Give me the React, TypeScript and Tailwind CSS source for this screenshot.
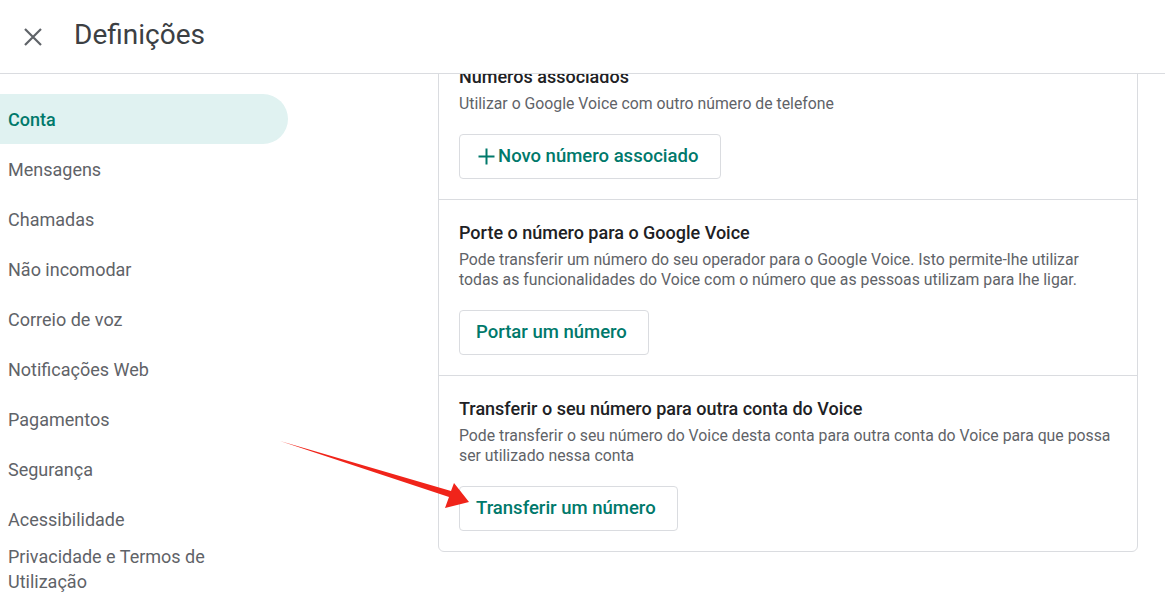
import React from 'react';

const font = { fontFamily: 'Roboto, "Noto Sans", Arial, sans-serif' };

const navItems = [
  'Conta',
  'Mensagens',
  'Chamadas',
  'Não incomodar',
  'Correio de voz',
  'Notificações Web',
  'Pagamentos',
  'Segurança',
  'Acessibilidade',
  'Privacidade e Termos de Utilização',
];

interface SectionProps {
  title: string;
  desc: string;
  button: React.ReactNode;
  btnWidth: string;
  last?: boolean;
}

const Section: React.FC<SectionProps> = ({ title, desc, button, btnWidth, last }) => (
  <div className={last ? 'px-5 pt-[21px] pb-[20px]' : 'px-5 pt-[21px] pb-[20px] border-b border-[#dadce0]'}>
    <div className="text-[18px] leading-6 font-medium text-[#202124]">{title}</div>
    <div className="text-[15.8px] leading-5 text-[#5f6368] mt-[5px]">{desc}</div>
    <button
      className={`${btnWidth} mt-[20px] h-[45px] pl-4 border border-[#dadce0] rounded-[4px] bg-white text-[18.5px] font-medium text-[#00796b] flex items-center`}
    >
      {button}
    </button>
  </div>
);

export default function App() {
  return (
    <div className="w-[1165px] h-[597px] bg-white overflow-hidden relative" style={font}>
      {/* Header */}
      <div className="h-[74px] flex items-center border-b border-[#dadce0]">
        <svg className="ml-[24px] w-[18px] h-[18px]" viewBox="0 0 18 18">
          <path d="M1 1 L17 17 M17 1 L1 17" stroke="#5f6368" strokeWidth="2.2" fill="none" />
        </svg>
        <div className="ml-[32px] text-[28px] text-[#3c4043] leading-none pb-[4px]">Definições</div>
      </div>

      <div className="flex h-[523px]">
        {/* Sidebar */}
        <div className="w-[288px] shrink-0 pt-[20px]">
          {navItems.map((item, i) => (
            <div
              key={item}
              className={
                i === 0
                  ? 'h-[50px] flex items-center pl-2 rounded-r-full bg-[#e0f2f1] text-[#00796b] font-medium text-[18px]'
                  : i === navItems.length - 1
                  ? 'pl-2 pr-[70px] text-[18px] leading-[25px] text-[#5f6368]'
                  : 'h-[50px] flex items-center pl-2 text-[18px] text-[#5f6368]'
              }
            >
              {item}
            </div>
          ))}
        </div>

        {/* Content */}
        <div className="flex-1 overflow-hidden">
          <div className="ml-[150px] w-[700px] -mt-[31px] border border-[#dadce0] rounded-[6px]">
            <Section
              title="Números associados"
              desc="Utilizar o Google Voice com outro número de telefone"
              btnWidth="w-[262px]"
              button={
                <>
                  <svg className="w-[17px] h-[17px] ml-[2px] mr-[3px]" viewBox="0 0 17 17">
                    <path d="M8.5 0.5 V16.5 M0.5 8.5 H16.5" stroke="#00796b" strokeWidth="2" fill="none" />
                  </svg>
                  Novo número associado
                </>
              }
            />
            <Section
              title="Porte o número para o Google Voice"
              desc="Pode transferir um número do seu operador para o Google Voice. Isto permite-lhe utilizar todas as funcionalidades do Voice com o número que as pessoas utilizam para lhe ligar."
              btnWidth="w-[190px]"
              button="Portar um número"
            />
            <Section
              title="Transferir o seu número para outra conta do Voice"
              desc="Pode transferir o seu número do Voice desta conta para outra conta do Voice para que possa ser utilizado nessa conta"
              btnWidth="w-[219px]"
              button="Transferir um número"
              last
            />
          </div>
        </div>
      </div>

      {/* Annotation arrow */}
      <svg className="absolute left-0 top-0 pointer-events-none" width="1165" height="597">
        <polygon points="280,441 451,491 454,483 469,502 445,508 449,497" fill="#f0241a" />
      </svg>
    </div>
  );
}
